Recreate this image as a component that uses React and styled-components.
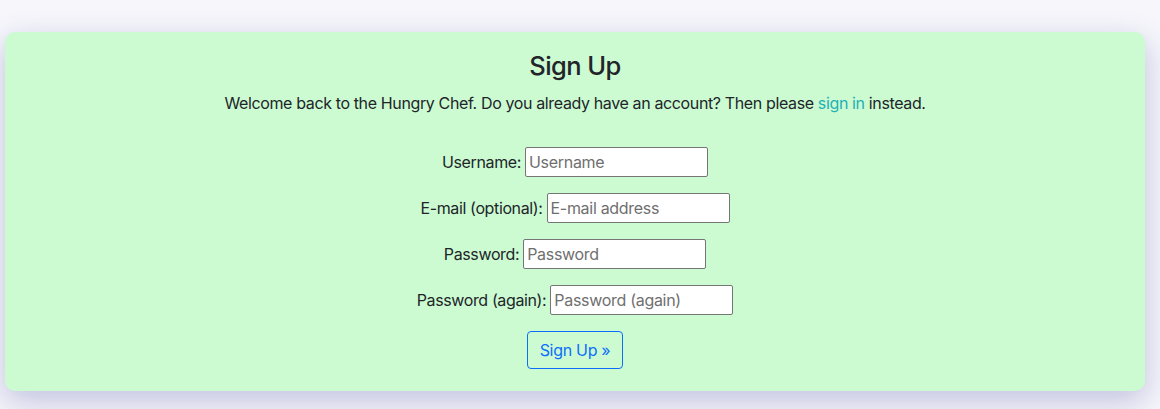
import React from 'react';
import styled, { createGlobalStyle } from 'styled-components';

const GlobalStyle = createGlobalStyle`
  body {
    margin: 0;
    background: #f6f6fb;
    font-family: Inter, "Noto Sans", sans-serif;
    font-size: 16px;
    letter-spacing: -0.37px;
    color: #212529;
  }
`;

const Page = styled.div`
  padding: 32px 15px 19px 5px;
`;

const Card = styled.section`
  background: #ccfbd2;
  border-radius: 10px;
  box-shadow: 0 10px 30px rgba(80, 80, 165, 0.32);
  padding: 17px 20px 22px;
  text-align: center;
`;

const Title = styled.h3`
  margin: 0 0 8px;
  font-size: 25.5px;
  font-weight: 500;
  letter-spacing: -0.6px;
  line-height: 34px;
`;

const Intro = styled.p`
  margin: 0 0 32px;
  line-height: 24px;
`;

const Link = styled.a`
  color: #1fb1b5;
  text-decoration: none;
`;

const Form = styled.form`
  display: flex;
  flex-direction: column;
  align-items: center;
  gap: 16px;
`;

const Row = styled.div`
  display: flex;
  align-items: center;
  gap: 4px;
  height: 30px;
`;

const Label = styled.label`
  font-size: 16px;
`;

const Input = styled.input`
  box-sizing: border-box;
  width: 183px;
  height: 30px;
  padding: 1px 3px;
  border: 1px solid #767676;
  border-radius: 2px;
  background: #fff;
  font: inherit;
  font-size: 16px;
  letter-spacing: -0.3px;
  color: #212529;
  &::placeholder {
    color: #6f6f6f;
  }
`;

const Button = styled.button`
  height: 38px;
  padding: 6px 12px;
  white-space: nowrap;
  background: transparent;
  color: #0d6efd;
  border: 1px solid #0d6efd;
  border-radius: 4px;
  font: inherit;
  font-size: 16px;
  letter-spacing: -0.3px;
`;

const fields = [
  { id: 'username', label: 'Username:', placeholder: 'Username' },
  { id: 'email', label: 'E-mail (optional):', placeholder: 'E-mail address' },
  { id: 'password1', label: 'Password:', placeholder: 'Password' },
  { id: 'password2', label: 'Password (again):', placeholder: 'Password (again)' },
];

export default function App() {
  return (
    <Page>
      <GlobalStyle />
      <Card>
        <Title>Sign Up</Title>
        <Intro>
          Welcome back to the Hungry Chef. Do you already have an account? Then please{' '}
          <Link href="#">sign in</Link> instead.
        </Intro>
        <Form onSubmit={e => e.preventDefault()}>
          {fields.map(f => (
            <Row key={f.id}>
              <Label htmlFor={f.id}>{f.label}</Label>
              <Input id={f.id} type="text" placeholder={f.placeholder} />
            </Row>
          ))}
          <Button type="submit">Sign Up »</Button>
        </Form>
      </Card>
    </Page>
  );
}
